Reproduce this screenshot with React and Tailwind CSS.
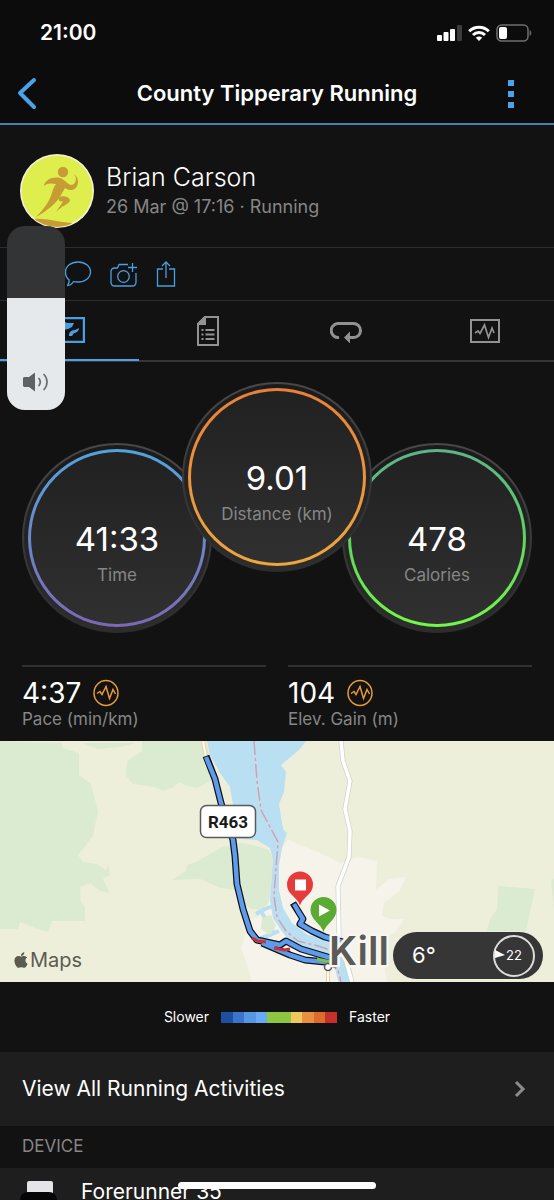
import React from 'react'
import { FaApple } from 'react-icons/fa'

const speedColors = [
  'bg-[#1f4fa0]',
  'bg-[#3a74cc]',
  'bg-[#5596e6]',
  'bg-[#6aa8f8]',
  'bg-[#8dc63f]',
  'bg-[#8dc63f]',
  'bg-[#f0c95c]',
  'bg-[#e98f3e]',
  'bg-[#dd6b2a]',
  'bg-[#c5302a]',
]

function StatusBar() {
  return (
    <div className="flex h-16 items-center justify-between pl-10 pr-[22px] pt-0.5">
      <span className="text-[21px] font-semibold">21:00</span>
      <div className="flex items-center gap-1.5">
        <svg width="26" height="16" viewBox="0 0 26 16" fill="#fff">
          <rect x="1" y="10" width="5" height="6" rx="1" />
          <rect x="7.5" y="7" width="5" height="9" rx="1" />
          <rect x="14" y="4" width="5" height="12" rx="1" />
          <rect x="21" y="0" width="5" height="16" rx="1" fill="#3c3c3c" />
        </svg>
        <svg width="22" height="16" viewBox="0 0 22 16" fill="none" stroke="#fff" strokeWidth="3">
          <path d="M1.2 6.2a14 14 0 0 1 19.6 0" />
          <path d="M5 10a8.5 8.5 0 0 1 12 0" />
          <path d="M11 16l-3.200-3.300a4.600 4.600 0 0 1 6.400 0z" fill="#fff" stroke="none" />
        </svg>
        <svg width="36" height="18" viewBox="0 0 36 18">
          <rect x="1" y="1" width="31" height="16" rx="4.5" fill="none" stroke="#6f6f6f" strokeWidth="1.5" />
          <rect x="3" y="3" width="8" height="12" rx="2" fill="#fff" />
          <path d="M33.6 6v6c2.2-.8 2.2-5.2 0-6z" fill="#6f6f6f" />
        </svg>
      </div>
    </div>
  )
}

function Header() {
  return (
    <header className="flex h-[61px] items-center justify-between border-b-2 border-[#4a7db5] px-4">
      <button aria-label="Back" className="w-8">
        <svg width="22" height="34" viewBox="0 0 22 34" fill="none" stroke="#4aa3e8" strokeWidth="4" strokeLinecap="round" strokeLinejoin="round">
          <path d="M18 3L4 16l14 14" />
        </svg>
      </button>
      <h1 className="text-[22px] font-semibold">County Tipperary Running</h1>
      <button aria-label="More" className="w-8">
        <svg width="10" height="28" viewBox="0 0 10 28" fill="#4aa3e8">
          <rect x="2" y="0" width="6" height="6" />
          <rect x="2" y="11" width="6" height="6" />
          <rect x="2" y="22" width="6" height="6" />
        </svg>
      </button>
    </header>
  )
}

function Avatar() {
  return (
    <svg width="74" height="74" viewBox="0 0 74 74" className="shrink-0">
      <defs>
        <clipPath id="avatar">
          <circle cx="37" cy="37" r="36" />
        </clipPath>
      </defs>
      <circle cx="37" cy="37" r="37" fill="#f4f2dc" />
      <circle cx="37" cy="37" r="35.5" fill="#deee4c" />
      <g fill="#c79c35" clipPath="url(#avatar)">
        <circle cx="43" cy="18" r="5.200" />
        <path d="M24 32c1-6 7-9 14-8.500 6 .5 8 6 13 7.500 3 0 5-3 5-6 0-2-1-3-2-5 4 3 5 8 3 12-2 5-8 5-12 2l-4 7c-5 9-13 15-25 22 8-8 13-15 16-24 1-4 2-6 4-9-5-1-9-1-12 2z" />
        <path d="M39 44c1-3 10-2 11 2 0 4-9 6-14 12 3-5 6-8 7-11-3 1-5 0-4-3z" />
        <path d="M14 65c10-1 24 3 38 4l-4 6H20z" />
      </g>
    </svg>
  )
}

function Profile() {
  return (
    <section className="flex h-[122px] items-start gap-3 px-5 pt-[29px]">
      <Avatar />
      <div className="pt-1.5">
        <div className="text-[25px] leading-[34px] font-light">Brian Carson</div>
        <div className="text-lg leading-[26px] text-[#868686]">26 Mar @ 17:16 · Running</div>
      </div>
    </section>
  )
}

function Actions() {
  return (
    <div className="flex h-[54px] items-center gap-[18px] border-y border-[#2d2d2d] pl-[22px]">
      <button aria-label="Like" className="mr-1">
        <svg width="20" height="26" viewBox="0 0 20 26" fill="none" stroke="#4a9fe0" strokeWidth="1.5">
          <path d="M10 21L2 13c-3-5 4-10 8-4 4-6 11-1 8 4z" />
        </svg>
      </button>
      <button aria-label="Comment">
        <svg width="28" height="26" viewBox="0 0 28 26" fill="none" stroke="#4a9fe0" strokeWidth="1.3" strokeLinejoin="round">
          <path d="M14 1c7 0 12.500 4.300 12.500 10S21 21 14 21c-2 0-3 0-4.500-.5C8 23 6 24.500 3.500 24.500c1-1.500 2-3.500 1.700-5.500C2.500 17 1.500 14 1.500 11 1.500 5.300 7 1 14 1z" />
        </svg>
      </button>
      <button aria-label="Add photo">
        <svg width="28" height="26" viewBox="0 0 28 26" fill="none" stroke="#4a9fe0" strokeWidth="1.3" strokeLinejoin="round">
          <path d="M18 3.500H9L7.500 7H4.500a3.500 3.500 0 0 0-3.500 3.500v11A3.500 3.500 0 0 0 4.500 25h18a3.500 3.500 0 0 0 3.500-3.500V12" />
          <circle cx="13.500" cy="15.500" r="5.800" />
          <path d="M22.500 2v9M18 6.500h9" />
        </svg>
      </button>
      <button aria-label="Share">
        <svg width="20" height="26" viewBox="0 0 20 26" fill="none" stroke="#4a9fe0" strokeWidth="1.3">
          <path d="M7 8H1.500v17h17V8H13M10 17V1M6 5l4-4 4 4" />
        </svg>
      </button>
    </div>
  )
}

function Tabs() {
  return (
    <nav className="grid h-[61px] grid-cols-4 border-b-2 border-[#363636]">
      <button aria-label="Map" className="-mb-px flex items-center justify-center border-b-2 border-[#4aa3e8]">
        <svg width="32" height="26" viewBox="0 0 32 26" fill="none" stroke="#4a9fe0">
          <rect x="1" y="1" width="30" height="24" strokeWidth="2.5" />
          <path d="M5 8l5-3 3 3-5 5" strokeWidth="3" />
          <path d="M10 5l5 1 6 0-2 4-4 2-5 1zM16 17c1-3 3-4 6-4l4-2c0 3-3 5-5 5l-2 3h-3z" fill="#4a9fe0" stroke="none" />
        </svg>
      </button>
      <button aria-label="Stats" className="flex items-center justify-center">
        <svg width="22" height="30" viewBox="0 0 22 30" fill="none" stroke="#929292" strokeWidth="2">
          <path d="M8 1h13v28H1V8z" />
          <path d="M1 8l7-7v7z" fill="#929292" />
          <path d="M4.500 14h2M4.500 18.500h2M4.500 23h2M8.500 14h9M8.500 18.500h9M8.500 23h9" />
        </svg>
      </button>
      <button aria-label="Laps" className="flex items-center justify-center pt-0.5">
        <svg width="32" height="22" viewBox="0 0 32 22" fill="none" stroke="#929292" strokeWidth="3">
          <path d="M9 16.500a7 7 0 0 1-1.500-14h16a7 7 0 0 1 0 14H19" />
          <path d="M14 16.500l6-6v12z" fill="#929292" stroke="none" />
        </svg>
      </button>
      <button aria-label="Charts" className="flex items-center justify-center">
        <svg width="30" height="24" viewBox="0 0 30 24" fill="none" stroke="#929292">
          <rect x="1" y="1" width="28" height="22" strokeWidth="2" />
          <path d="M5 14l3-2 2 2.500 4.500-8.500 4 12.500 3.500-9.500 2 5" strokeWidth="1.7" />
        </svg>
      </button>
    </nav>
  )
}

function Dial({ value, label, ring, className }) {
  return (
    <div className={`size-[190px] shrink-0 rounded-full bg-gradient-to-b from-[#484848] to-[#2c2c2c] p-0.5 ${className}`}>
      <div className="size-full rounded-full bg-gradient-to-b from-[#1b1b1b] to-[#2d2d2d] p-1">
        <div className={`size-full rounded-full bg-gradient-to-b p-[3px] ${ring}`}>
          <div className="flex size-full flex-col items-center justify-center rounded-full bg-gradient-to-b from-[#212121] to-[#303030] pt-[34px]">
            <div className="text-[33px] leading-10">{value}</div>
            <div className="text-[17px] leading-8 text-[#868686]">{label}</div>
          </div>
        </div>
      </div>
    </div>
  )
}

function Stat({ value, label }) {
  return (
    <div className="flex-1 border-t-2 border-[#303030] pt-2">
      <div className="flex h-9 items-center gap-3">
        <span className="text-[28px] leading-9">{value}</span>
        <svg width="26" height="28" viewBox="0 0 26 28" fill="none" stroke="#e99b35" strokeWidth="1.5">
          <ellipse cx="13" cy="14" rx="12" ry="12.500" />
          <path d="M4 14.500l3-2 2 3 4-8 3.500 12 3.500-9 2.500 4.500" />
        </svg>
      </div>
      <div className="text-[17px] leading-4 text-[#868686]">{label}</div>
    </div>
  )
}

function RouteMap() {
  return (
    <section className="relative h-[241px] overflow-hidden bg-[#eeefdb]">
      <svg viewBox="0 0 554 241" preserveAspectRatio="xMidYMid slice" className="size-full" fill="none" strokeLinejoin="round">
        <g fill="#dbebd1">
          <path d="M0 0L62 2 63 7l16 5v22l12 9 7 27-5 25-15 19 5 7 14 2 9 6 2-6 2 11-7 4 7 14-10-2-10-8-10 4 1 15 4 5v14H52l-4 11-13-4-15-6-2 7H0z" />
          <path d="M82 2l16 6 22-2 16-4zM142 0v10l-15 10-1 15 7 8 22 3 8 4 9-3 8-6 5 3 12 3 20-10L205 0z" />
          <path d="M172 139l14-9 1-6 9-3 12-7 14-8 18-4 17 3 12 4 4 10-3 40-8 10-10-1-10-5-8-14-14-2-20-9z" />
          <path d="M498 145l37 3-9 42h-39l3-12 7-10zM551 140l3-3v30z" />
        </g>
        <path fill="#f6f3ea" d="M288 99l32 13 20 10 17-6 20 4-1 29 13-11 17-2-6 13-16 13-2 13 7 3 15 0-9 14-15 6 7 43H252l-7-24-4-10 9-28 10-4 8-8 5-30 5-25z" />
        <path fill="#b8dff2" d="M207 0l3 14 10 18 10 14 3 18-4 33 28 2 13 8 3 12-3 40 3 18 8 12 10 13 30 10 15 8 6 21h12l-5-24-6-12-18-8-17-3-16-12-9-15-4-18 0-25 3-17 5-15-4-4-4-25 5-12 2-20-5-7 6-5 12-10 9-11z" />
        <path stroke="#b8dff2" strokeWidth="4" d="M256 173l9-5 8-3M258 198l12-4 9-4M262 172l12 20" />
        <path fill="#dbebd1" d="M262 177l9-3 5 11-6 9-9-6z" />
        <path stroke="#c4dcec" strokeWidth="5" d="M254 0l3 40 4 29 17 32-4 54 3 21 9 14 12 10 20 5 15 5 8 31" />
        <path stroke="#bba9c0" strokeWidth="1.500" strokeDasharray="14 3 3 3" d="M254 0l3 40 4 29 17 32-4 54 3 21 9 14 12 10 20 5 15 5 8 31" />
        <path stroke="#d3d3cc" strokeWidth="5" d="M341 0l2 20 7 20-5 28 5 22-1 26-11 29 1 50 13 46" />
        <path stroke="#fff" strokeWidth="3.500" d="M341 0l2 20 7 20-5 28 5 22-1 26-11 29 1 50 13 46" />
        <path stroke="#e6d2a0" strokeWidth="4" d="M203 0l3 16M328 229v12" />
        <path stroke="#fffdf2" strokeWidth="2" d="M203 0l3 16M328 229v12" />

        <g stroke="#111" strokeWidth="7">
          <path d="M206 15l9 23 6 24 12 37 2 16 2 28 6 25 7 22 7 9 23 5 6-4 15 8 20 6 10 3 10-10" />
          <path d="M262 202l28 12 15 5 20 2 12 3" />
          <path d="M293 162l5 8 5 8-3 5 12 7 13 6 18 5" />
        </g>
        <g stroke="#5d9bef" strokeWidth="4.500">
          <path d="M206 16l9 22 6 24 12 37 2 16 2 28 6 25 7 22 7 9 23 5 6-4 15 8 20 6 10 3 10-10" />
          <path d="M262 202l28 12 15 5 20 2 12 3" />
          <path d="M294 163l4 7 5 8-3 5 12 7 13 6 18 5" />
        </g>
        <path stroke="#c93232" strokeWidth="3" d="M252 197l6 3 8 1M274 207l10 2 6-1" />
        <path stroke="#86bf3a" strokeWidth="3" d="M317 218l14 3" />
        <circle cx="328" cy="226" r="3.500" fill="#fff" stroke="#555" strokeWidth="1.5" />

        <path fill="#59ab32" d="M323.500 191c-2-8-13-12-13-22a13 13 0 0 1 26 0c0 10-11 14-13 22z" />
        <path fill="#fff" d="M319 163.500l11 6-11 6z" />
        <path fill="#e53b3b" d="M300 164.500c-2-8-13-11-13-21a13 13 0 0 1 26 0c0 10-11 13-13 21z" />
        <path fill="#fff" d="M295 138.500h11v11h-11z" />

        <rect x="200.500" y="64.500" width="55" height="32" rx="6" fill="#fff" stroke="#5a5a5a" strokeWidth="1.5" />
        <text x="228" y="87" textAnchor="middle" fill="#1a1a1a" className="font-[Roboto,'Liberation_Sans',sans-serif] text-[17px] font-bold">R463</text>
        <text x="329" y="224" fill="#5a5a58" stroke="#f8f6ef" strokeWidth="5" paintOrder="stroke" className="text-[40px] font-semibold">Kill</text>
      </svg>
      <div className="absolute bottom-2.5 left-3 flex items-center text-[#5c5b50]">
        <FaApple className="size-[18px]" />
        <span className="text-xl leading-6">Maps</span>
      </div>
      <div className="absolute right-[11px] bottom-[3px] flex h-[47px] w-[150px] items-center justify-between rounded-full bg-[#363636] pr-2 pl-[19px]">
        <span className="text-[22px]">6°</span>
        <div className="relative flex size-[42px] items-center justify-center rounded-full border-2 border-[#dcdcdc] text-[13px]">
          22
          <svg width="10" height="8" viewBox="0 0 10 8" className="absolute top-[13px] left-0" fill="#fff">
            <path d="M0 0l10 5-10 3z" />
          </svg>
        </div>
      </div>
    </section>
  )
}

function SpeedLegend() {
  return (
    <div className="flex h-[70px] items-center justify-center gap-3 text-sm">
      <span>Slower</span>
      <div className="flex h-[11px] w-[116px]">
        {speedColors.map((color, i) => (
          <div key={i} className={`flex-1 ${color}`} />
        ))}
      </div>
      <span>Faster</span>
    </div>
  )
}

function VolumeSlider() {
  return (
    <div className="absolute top-[226px] left-[7px] flex h-[184px] w-[58px] flex-col overflow-hidden rounded-[18px] bg-[#323436]">
      <div className="mt-[72px] flex flex-1 items-end justify-center bg-[#e5e9ec] pb-[18px]">
        <svg width="28" height="20" viewBox="0 0 28 20" fill="none" stroke="#6b6e71" strokeWidth="1.7" strokeLinecap="round">
          <path d="M3 5h4l6-4.500v19L7 15H3c-1.500 0-2-.5-2-2V7c0-1.500.5-2 2-2z" fill="#5f6265" stroke="none" />
          <path d="M17 6.500c1.500 2 1.500 5 0 7M22 2.500c4 4 4 11 0 15" />
        </svg>
      </div>
      <input type="range" aria-label="Volume" defaultValue="61" className="absolute inset-0 size-full opacity-0" />
    </div>
  )
}

export default function App() {
  return (
    <div className="relative h-screen overflow-hidden bg-[#121212] font-['Inter','Liberation_Sans',sans-serif] text-white">
      <div className="bg-[#0c0c0c]">
        <StatusBar />
        <Header />
      </div>
      <Profile />
      <Actions />
      <Tabs />

      <section className="flex items-end justify-center px-[22px] pt-5 pb-8">
        <Dial value="41:33" label="Time" ring="from-[#4fa3dd] to-[#7b68b5]" className="" />
        <Dial value="9.01" label="Distance (km)" ring="from-[#e8803a] to-[#eda63f]" className="z-10 -mx-[30px] mb-[61px]" />
        <Dial value="478" label="Calories" ring="from-[#5cb389] via-[#60d45c] to-[#74f848]" className="" />
      </section>

      <section className="flex gap-[22px] px-[22px] pb-3.5">
        <Stat value="4:37" label="Pace (min/km)" />
        <Stat value="104" label="Elev. Gain (m)" />
      </section>

      <RouteMap />
      <SpeedLegend />

      <a href="#activities" className="flex h-[74px] items-center justify-between bg-[#1e1e1e] pr-7 pl-[22px] text-[21px]">
        View All Running Activities
        <svg width="12" height="18" viewBox="0 0 12 18" fill="none" stroke="#8c8c8c" strokeWidth="3">
          <path d="M2 2l7 7-7 7" />
        </svg>
      </a>
      <h2 className="flex h-[42px] items-center px-[22px] text-[17px] text-[#868686]">DEVICE</h2>
      <a href="#device" className="flex h-16 items-start gap-6 bg-[#1e1e1e] px-5 pt-3 text-[21px]">
        <svg width="37" height="44" viewBox="0 0 37 44">
          <rect x="7" y="1" width="26" height="42" rx="2" fill="#e4e4e8" />
          <rect x="0" y="12" width="37" height="32" rx="8" fill="#050506" />
        </svg>
        <span className="leading-6">Forerunner 35</span>
      </a>

      <VolumeSlider />
      <div className="absolute bottom-[11px] left-1/2 h-[7px] w-[198px] -translate-x-1/2 rounded-full bg-white" />
    </div>
  )
}
